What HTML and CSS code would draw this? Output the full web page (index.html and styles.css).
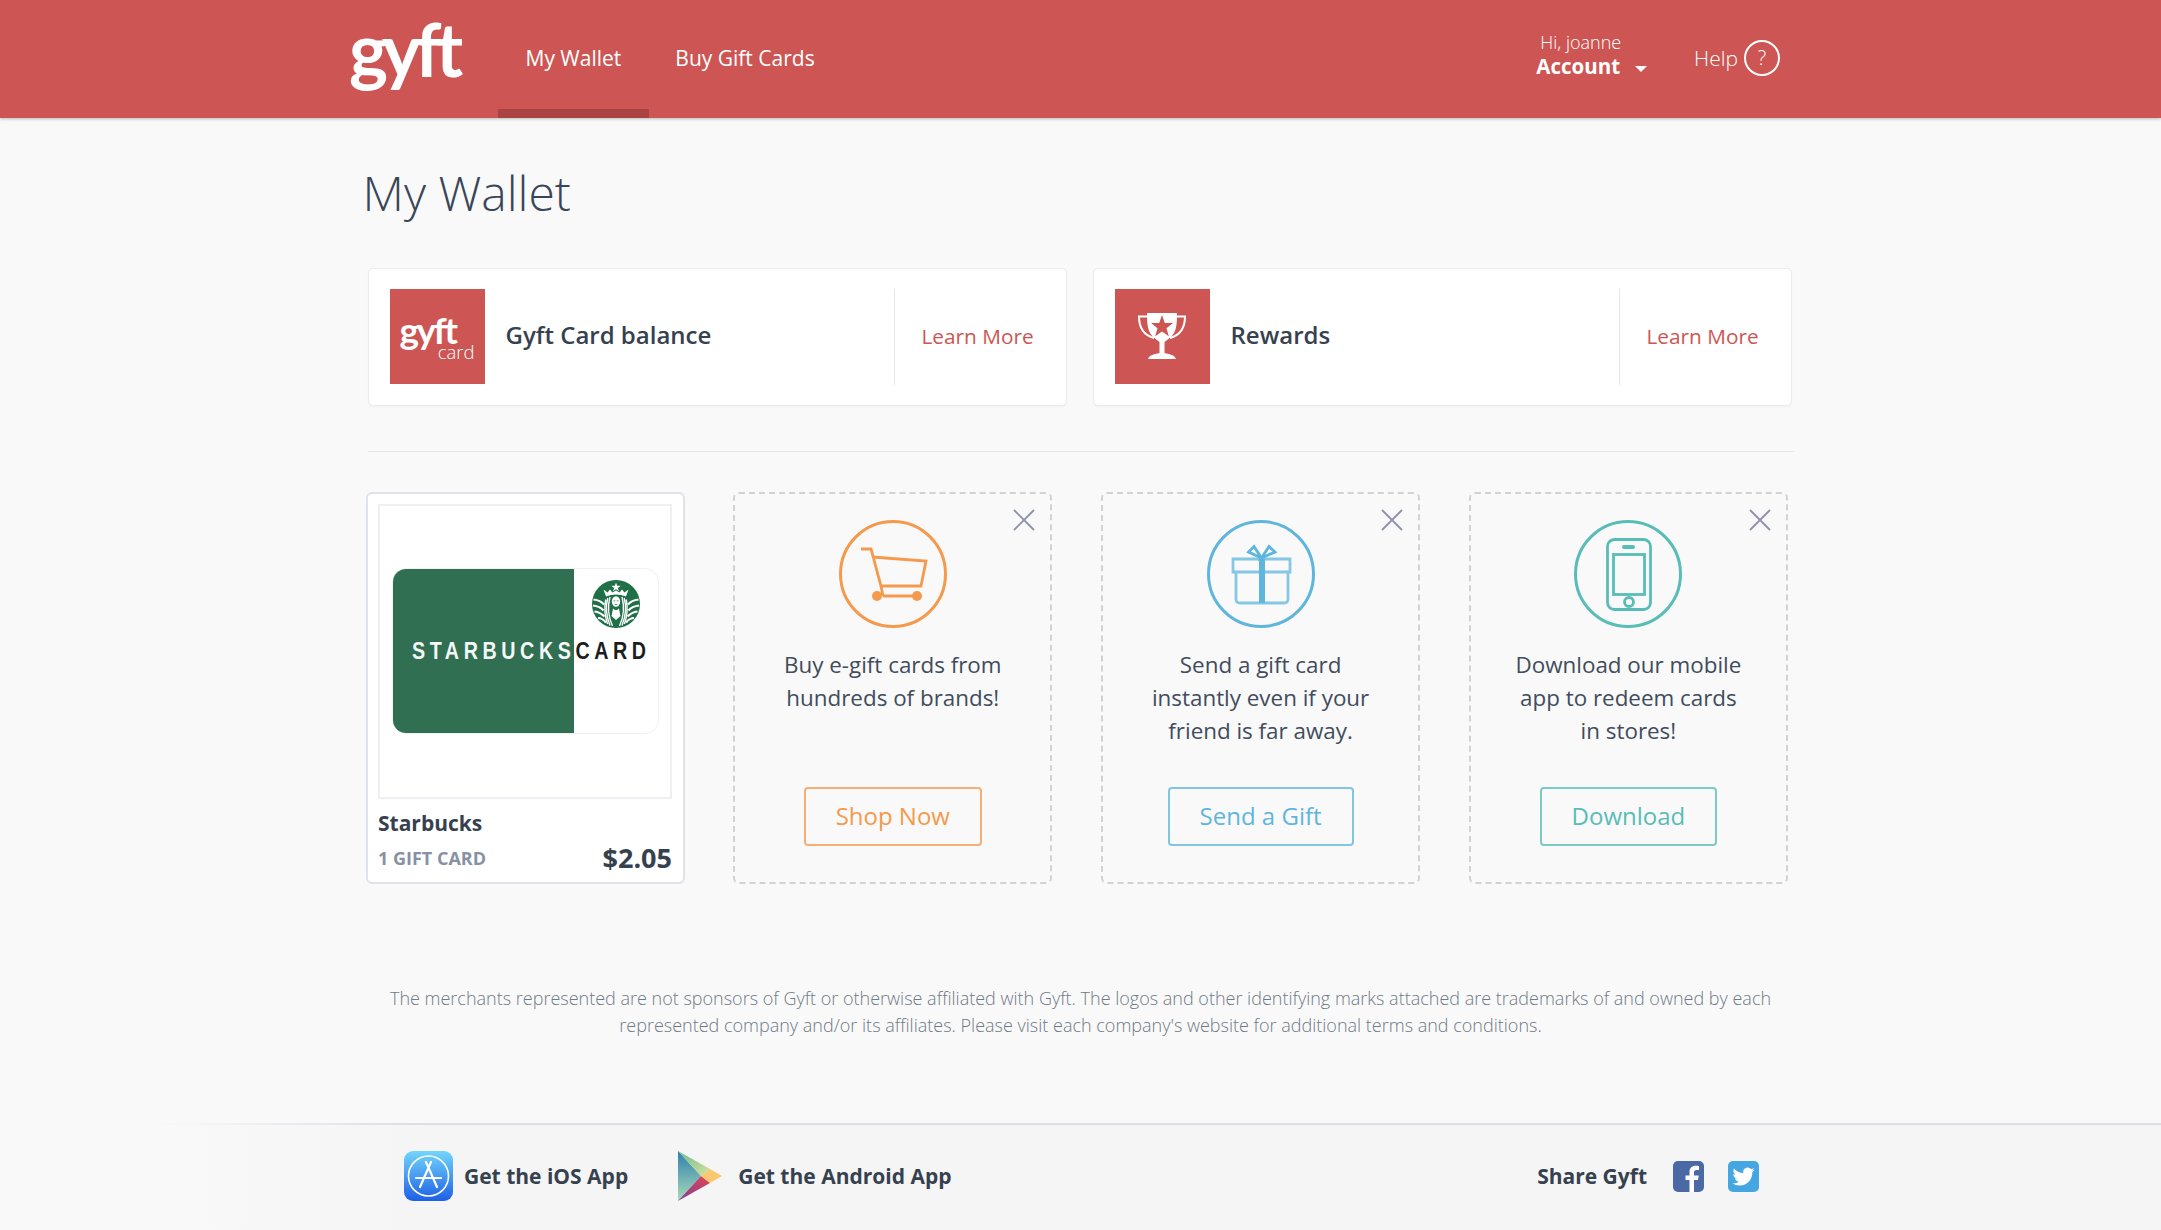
FILE: index.html
```html
<!DOCTYPE html>
<html lang="en">
<head>
<meta charset="utf-8">
<title>My Wallet - Gyft</title>
<link rel="stylesheet" href="styles.css">
</head>
<body>
<header class="topbar">
  <a class="logo">gyft</a>
  <nav class="nav">
    <a class="nav-item active">My Wallet</a>
    <a class="nav-item">Buy Gift Cards</a>
  </nav>
  <div class="topbar-right">
    <div class="account">
      <span class="hi">Hi, joanne</span>
      <span class="acct">Account<i class="caret"></i></span>
    </div>
    <div class="help">
      <span>Help</span>
      <span class="help-circle">?</span>
    </div>
  </div>
</header>

<main class="page">
  <h1 class="title">My Wallet</h1>

  <section class="summary">
    <div class="summary-card">
      <div class="badge badge-gyft"><span class="badge-logo">gyft</span><span class="badge-sub">card</span></div>
      <div class="summary-label">Gyft Card balance</div>
      <a class="learn">Learn More</a>
    </div>
    <div class="summary-card">
      <div class="badge">
        <svg class="trophy" viewBox="0 0 94 95" width="94" height="95">
          <path class="tr-handle" d="M33 27.500H24C24 38 28 46 39 49M61 27.500H70C70 38 66 46 55 49"/>
          <path class="tr-fill" d="M32 24H62C62 34 62 44 54 49.500L49.500 53V64C54 65 60 66 61 70H33C34 66 40 65 44.500 64V53L40 49.500C32 44 32 34 32 24Z"/>
          <path class="tr-star" d="M47 26L49.800 33.900L58 34.100L51.500 39.200L53.800 47.200L47 42.500L40.200 47.200L42.500 39.200L36 34.100L44.200 33.900Z"/>
        </svg>
      </div>
      <div class="summary-label">Rewards</div>
      <a class="learn">Learn More</a>
    </div>
  </section>

  <hr class="rule">

  <section class="tiles">
    <article class="tile tile-card">
      <div class="card-frame">
        <div class="sbux">
          <div class="sbux-green"></div>
          <svg class="siren" viewBox="0 0 48 48" width="48" height="48">
            <circle cx="24" cy="24" r="24" fill="#1f6f47"/>
            <path fill="#fff" d="M24 2.500L25.200 5.800H28.700L25.900 7.900L27 11.200L24 9.200L21 11.200L22.100 7.900L19.300 5.800H22.800Z"/>
            <path fill="#fff" d="M11.500 9.500L15.500 12.500L18 9.500L20.500 12.500L24 10.500L27.500 12.500L30 9.500L32.500 12.500L36.500 9.500L34 16.500Q24 12.500 14 16.500Z"/>
            <ellipse cx="24" cy="21.500" rx="4.200" ry="5.200" fill="#fff"/>
            <path fill="#1f6f47" d="M21.500 20.500H23.200V21.300H21.500ZM24.800 20.500H26.500V21.300H24.800ZM22.800 24H25.200V24.800H22.800Z"/>
            <path fill="none" stroke="#fff" stroke-width="1.400" d="M18 17C15.500 26 16 36 20.500 46M15.800 18C13.500 26 14.200 36 18 45.500M13.700 19.500C12.200 27 12.800 36 15.600 44M30 17C32.500 26 32 36 27.500 46M32.200 18C34.500 26 33.800 36 30 45.500M34.300 19.500C35.800 27 35.200 36 32.400 44"/>
            <path fill="#fff" d="M21 28.500Q24 31.500 27 28.500L28.500 36L24 40L19.500 36Z"/>
            <path fill="none" stroke="#fff" stroke-width="2" d="M1.500 19.500C6 20 9.500 21.500 12 24.500M1 25.500C5.500 26 9 27.500 11.500 30.500M2.500 31.500C6.500 32 9.500 33.500 12.500 36.500M6 38C9 38 11.500 39.500 14 42.500M46.500 19.500C42 20 38.500 21.500 36 24.500M47 25.500C42.500 26 39 27.500 36.500 30.500M45.500 31.500C41.500 32 38.500 33.500 35.500 36.500M42 38C39 38 36.500 39.500 34 42.500"/>
          </svg>
          <div class="sbux-text"><span class="sbux-w">STARBUCKS</span><span class="sbux-k">CARD</span></div>
        </div>
      </div>
      <div class="card-name">Starbucks</div>
      <div class="card-meta"><span class="card-count">1 GIFT CARD</span><span class="card-value">$2.05</span></div>
    </article>

    <article class="tile tile-promo orange">
      <svg class="close" viewBox="0 0 22 22" width="22" height="22"><path d="M1 1L21 21M21 1L1 21"/></svg>
      <svg class="promo-icon" viewBox="0 0 108 108" width="108" height="108">
        <circle class="ic-ring" cx="54" cy="54" r="52.500"/>
        <path class="ic-line" d="M22 29H32L42 66H82L87 41L33 37M44 76H78M42 66L44 76"/>
        <circle class="ic-dot" cx="38" cy="76" r="5"/><circle class="ic-dot" cx="78" cy="76" r="5"/>
      </svg>
      <p class="promo-text">Buy e-gift cards from hundreds of brands!</p>
      <a class="btn">Shop Now</a>
    </article>

    <article class="tile tile-promo blue">
      <svg class="close" viewBox="0 0 22 22" width="22" height="22"><path d="M1 1L21 21M21 1L1 21"/></svg>
      <svg class="promo-icon" viewBox="0 0 108 108" width="108" height="108">
        <circle class="ic-ring" cx="54" cy="54" r="52.500"/>
        <path class="ic-line ic-soft" d="M26 39H83V52H26ZM29 52V79Q29 83 33 83H77Q81 83 81 79V52"/>
        <path class="ic-line" d="M54.500 38L41.500 32L47 26.500ZM54.500 38L68 32L62 26.500Z"/>
        <path class="ic-bar" d="M52 39H58V83H52Z"/>
      </svg>
      <p class="promo-text">Send a gift card instantly even if your friend is far away.</p>
      <a class="btn">Send a Gift</a>
    </article>

    <article class="tile tile-promo teal">
      <svg class="close" viewBox="0 0 22 22" width="22" height="22"><path d="M1 1L21 21M21 1L1 21"/></svg>
      <svg class="promo-icon" viewBox="0 0 108 108" width="108" height="108">
        <circle class="ic-ring" cx="54" cy="54" r="52.500"/>
        <rect class="ic-line" x="33.500" y="19.500" width="43" height="70" rx="7"/>
        <rect class="ic-line" x="39.500" y="34.500" width="31" height="40"/>
        <rect class="ic-dot" x="48" y="25" width="13" height="4" rx="2"/>
        <circle class="ic-line" cx="55" cy="82" r="4.500"/>
      </svg>
      <p class="promo-text">Download our mobile app to redeem cards in&nbsp;stores!</p>
      <a class="btn">Download</a>
    </article>
  </section>

  <p class="disclaimer">The merchants represented are not sponsors of Gyft or otherwise affiliated with Gyft. The logos and other identifying marks attached are trademarks of and owned by each represented company and/or its affiliates. Please visit each company's website for additional terms and conditions.</p>
</main>

<footer class="footer">
  <a class="get-app">
    <svg class="app-ic" viewBox="0 0 49 50" width="49" height="50">
      <defs><linearGradient id="ios" x1="0" y1="0" x2="0" y2="1"><stop offset="0" stop-color="#72d6fb"/><stop offset="1" stop-color="#1e5fe6"/></linearGradient></defs>
      <rect width="49" height="50" rx="9" fill="url(#ios)"/>
      <circle cx="24.500" cy="25" r="20" fill="none" stroke="#fff" stroke-width="1.600"/>
      <path fill="none" stroke="#fff" stroke-width="2.200" stroke-linecap="round" d="M27 11L16 36M22 11L33 36M12 27H37"/>
    </svg>
    <span>Get the iOS App</span>
  </a>
  <a class="get-app android">
    <svg class="app-ic" viewBox="0 0 45 50" width="45" height="50">
      <defs>
        <linearGradient id="pl" x1="0" y1="0" x2="0" y2="1"><stop offset="0" stop-color="#2f7fae"/><stop offset="1" stop-color="#a8dcb8"/></linearGradient>
        <linearGradient id="pt" x1="0" y1="0" x2="1" y2="1"><stop offset="0" stop-color="#6fb98f"/><stop offset="1" stop-color="#d6e4a0"/></linearGradient>
        <linearGradient id="pb" x1="0" y1="1" x2="1" y2="0"><stop offset="0" stop-color="#7d3f9e"/><stop offset="1" stop-color="#e0454f"/></linearGradient>
      </defs>
      <path fill="url(#pl)" d="M1 0V50L24 25Z"/>
      <path fill="url(#pt)" d="M1 0L33 18L24 25Z"/>
      <path fill="url(#pb)" d="M1 50L33 32L24 25Z"/>
      <path fill="#f8c76f" d="M33 18L45 25L33 32L24 25Z"/>
    </svg>
    <span>Get the Android App</span>
  </a>
  <div class="share">
    <span class="share-label">Share Gyft</span>
    <svg class="social" viewBox="0 0 31 31" width="31" height="31">
      <rect width="31" height="31" rx="5" fill="#4a69a5"/>
      <path fill="#fff" d="M21 31V19H25L25.700 14.400H21V11.500C21 10 21.600 9 23.500 9H26V5C25.300 4.900 24 4.800 22.500 4.800C19 4.800 16.500 7 16.500 10.800V14.400H12.500V19H16.500V31Z"/>
    </svg>
    <svg class="social" viewBox="0 0 31 31" width="31" height="31">
      <rect width="31" height="31" rx="5" fill="#46a6e2"/>
      <g transform="translate(4.500 4.500) scale(.92)"><path fill="#fff" d="M23.953 4.570a10 10 0 01-2.825.775 4.958 4.958 0 002.163-2.723c-.951.555-2.005.959-3.127 1.184a4.920 4.920 0 00-8.384 4.482C7.690 8.095 4.067 6.130 1.640 3.162a4.822 4.822 0 00-.666 2.475c0 1.710.870 3.213 2.188 4.096a4.904 4.904 0 01-2.228-.616v.060a4.923 4.923 0 003.946 4.827 4.996 4.996 0 01-2.212.085 4.936 4.936 0 004.604 3.417 9.867 9.867 0 01-6.102 2.105c-.390 0-.779-.023-1.170-.067a13.995 13.995 0 007.557 2.209c9.053 0 13.998-7.496 13.998-13.985 0-.210 0-.420-.015-.630A9.935 9.935 0 0024 4.590z"/></g>
    </svg>
  </div>
</footer>
</body>
</html>
```

FILE: styles.css
```css
* { box-sizing: border-box; }
html, body { margin: 0; padding: 0; }
body {
  width: 2161px;
  height: 1230px;
  overflow: hidden;
  background: #f9f9f9;
  font-family: "Open Sans", "Liberation Sans", sans-serif;
  color: #36414f;
  display: flex;
  flex-direction: column;
}
a { color: inherit; text-decoration: none; }

/* top bar */
.topbar {
  height: 118px;
  flex: none;
  background: #cd5654;
  color: #fff;
  display: flex;
  align-items: stretch;
  padding: 0 381px 0 349px;
  box-shadow: 0 1px 3px rgba(0, 0, 0, .25);
}
.logo {
  width: 109px;
  margin-right: 40px;
  font-family: "Lato", sans-serif;
  font-weight: 700;
  font-size: 74px;
  line-height: 98px;
  letter-spacing: -6px;
  white-space: nowrap;
}
.nav { display: flex; }
.nav-item {
  padding: 0 27.500px;
  font-size: 21px;
  line-height: 116px;
  border-bottom: 9px solid transparent;
}
.nav-item.active { border-bottom-color: #a94442; }
.nav-item + .nav-item { padding-left: 26.500px; }
.topbar-right { margin-left: auto; display: flex; align-items: center; }
.account { display: flex; flex-direction: column; align-items: flex-start; margin-right: 47px; padding-bottom: 10px; }
.hi {
  font-weight: 300;
  font-size: 18px;
  line-height: 24px;
  padding-left: 4px;
}
.acct { font-weight: 700; font-size: 20.500px; line-height: 24px; display: flex; align-items: center; }
.caret {
  width: 0;
  height: 0;
  margin: 6px 0 0 15px;
  border-left: 6px solid transparent;
  border-right: 6px solid transparent;
  border-top: 6px solid #fff;
}
.help { display: flex; align-items: center; font-weight: 300; font-size: 21px; gap: 6px; margin-top: -3px; }
.help-circle {
  width: 36px;
  height: 36px;
  border: 2px solid #fff;
  border-radius: 50%;
  display: flex;
  align-items: center;
  justify-content: center;
  font-size: 20px;
}

/* page */
.page { width: 1426px; margin: 0 auto; flex: 1; }
.title {
  margin: 0 0 0 -5px;
  padding-top: 43px;
  font-weight: 300;
  font-size: 48px;
  line-height: 64px;
  color: #394658;
}
.summary { display: flex; gap: 26px; margin-top: 43px; }
.summary-card {
  width: 699px;
  height: 138px;
  background: #fff;
  border: 1px solid #ececec;
  border-radius: 5px;
  box-shadow: 0 1px 2px rgba(0, 0, 0, .04);
  padding: 20px 0 20px 21px;
  display: flex;
  align-items: stretch;
}
.badge {
  width: 95px;
  height: 95px;
  background: #cd5654;
  flex: none;
  position: relative;
  color: #fff;
}
.trophy { display: block; }
.tr-handle { fill: none; stroke: #fff; stroke-width: 2; }
.tr-fill { fill: #fff; }
.tr-star { fill: #cd5654; }
.badge-logo {
  position: absolute;
  left: 10px;
  top: 26px;
  font-family: "Lato", sans-serif;
  font-weight: 700;
  font-size: 37px;
  line-height: 30px;
  letter-spacing: -2.500px;
}
.badge-sub {
  position: absolute;
  right: 10px;
  top: 56px;
  font-weight: 300;
  font-size: 18.500px;
  line-height: 14px;
}
.summary-label {
  flex: 1;
  margin-left: 21px;
  font-weight: 600;
  font-size: 24px;
  line-height: 92px;
  color: #36414f;
}
.learn {
  width: 172px;
  flex: none;
  padding-left: 27px;
  border-left: 1px solid #e5e5e5;
  color: #cd5654;
  font-size: 20.800px;
  line-height: 95px;
  white-space: nowrap;
}
.rule { border: 0; border-top: 1px solid #e7e7e7; margin: 45px 0 40px; }

/* tiles */
.tiles { display: grid; grid-template-columns: repeat(4, 319px); column-gap: 48.800px; margin-left: -2px; }
.tile { height: 392px; border-radius: 6px; position: relative; }
.tile-card {
  background: #fff;
  border: 2px solid #e0e2ea;
  padding: 10px 10.500px 0;
}
.card-frame {
  height: 295px;
  border: 2px solid #eef0f4;
  display: flex;
  align-items: center;
  justify-content: center;
}
.sbux {
  width: 267px;
  height: 166px;
  margin-top: -2px;
  border: 1px solid #eef2f1;
  border-radius: 14px;
  position: relative;
  overflow: hidden;
  background: #fff;
}
.sbux-green { position: absolute; left: 0; top: 0; bottom: 0; width: 181px; background: #316f52; }
.siren { position: absolute; left: 199.500px; top: 11px; }
.sbux-text {
  position: absolute;
  left: 19px;
  top: 68px;
  white-space: nowrap;
  font-family: "Liberation Sans", sans-serif;
  font-weight: 700;
  font-size: 24px;
  line-height: 28px;
  letter-spacing: 5.600px;
  transform: scaleX(.82);
  transform-origin: left center;
}
.sbux-w { color: #f4f8f6; }
.sbux-k { color: #1d1d1d; }
.card-name { margin-top: 9px; font-weight: 700; font-size: 21px; line-height: 30px; color: #36414f; }
.card-meta { display: flex; justify-content: space-between; align-items: center; margin-top: 2px; }
.card-count { font-weight: 700; font-size: 18px; color: #8791a3; }
.card-value { font-weight: 700; font-size: 27px; line-height: 36px; color: #36414f; }

.tile-promo {
  border: 2px dashed #d0d2d5;
  display: flex;
  flex-direction: column;
  align-items: center;
  padding: 26px 0 36px;
}
.close { position: absolute; right: 15px; top: 14.500px; fill: none; stroke: #8a94a6; stroke-width: 1.800; }
.promo-icon { display: block; flex: none; }
.promo-text {
  margin: 20px 0 0;
  width: 236px;
  text-align: center;
  font-size: 22.400px;
  line-height: 33px;
  color: #414c5c;
}
.btn {
  margin-top: auto;
  height: 59px;
  padding: 0 30px;
  border: 2px solid color-mix(in srgb, currentColor 78%, transparent);
  border-radius: 4px;
  font-size: 24px;
  line-height: 54px;
  white-space: nowrap;
}
.orange { --tone: #f59a4c; }
.blue { --tone: #5eb6dc; }
.teal { --tone: #59bdb7; }
.tile-promo .btn { color: var(--tone); }
.ic-ring { fill: none; stroke: var(--tone); stroke-width: 3; }
.ic-line { fill: none; stroke: var(--tone); stroke-width: 2.800; }
.ic-soft { stroke-opacity: .75; }
.ic-dot, .ic-bar { fill: var(--tone); }

.disclaimer {
  margin: 101px auto 0;
  width: 1420px;
  text-align: center;
  font-weight: 300;
  font-size: 18px;
  line-height: 27px;
  color: #6f7987;
}

/* footer */
.footer {
  height: 107px;
  flex: none;
  background: linear-gradient(to right, #f9f9f9 170px, #f5f5f5 400px);
  border-top: 2px solid transparent;
  border-image: linear-gradient(to right, #f9f9f9 157px, #dfdbe8 420px) 1;
  display: flex;
  align-items: center;
  padding: 0 402px 0 404px;
}
.get-app { display: flex; align-items: center; font-weight: 700; font-size: 21px; color: #36414f; gap: 11px; margin-top: -3px; }
.android { margin-left: 49px; gap: 16px; }
.app-ic { display: block; }
.share { margin-left: auto; display: flex; align-items: center; margin-top: -3px; }
.share-label { font-weight: 700; font-size: 21px; color: #36414f; margin-right: 26px; }
.social { display: block; margin-right: 24px; }
.social:last-child { margin-right: 0; }
```
